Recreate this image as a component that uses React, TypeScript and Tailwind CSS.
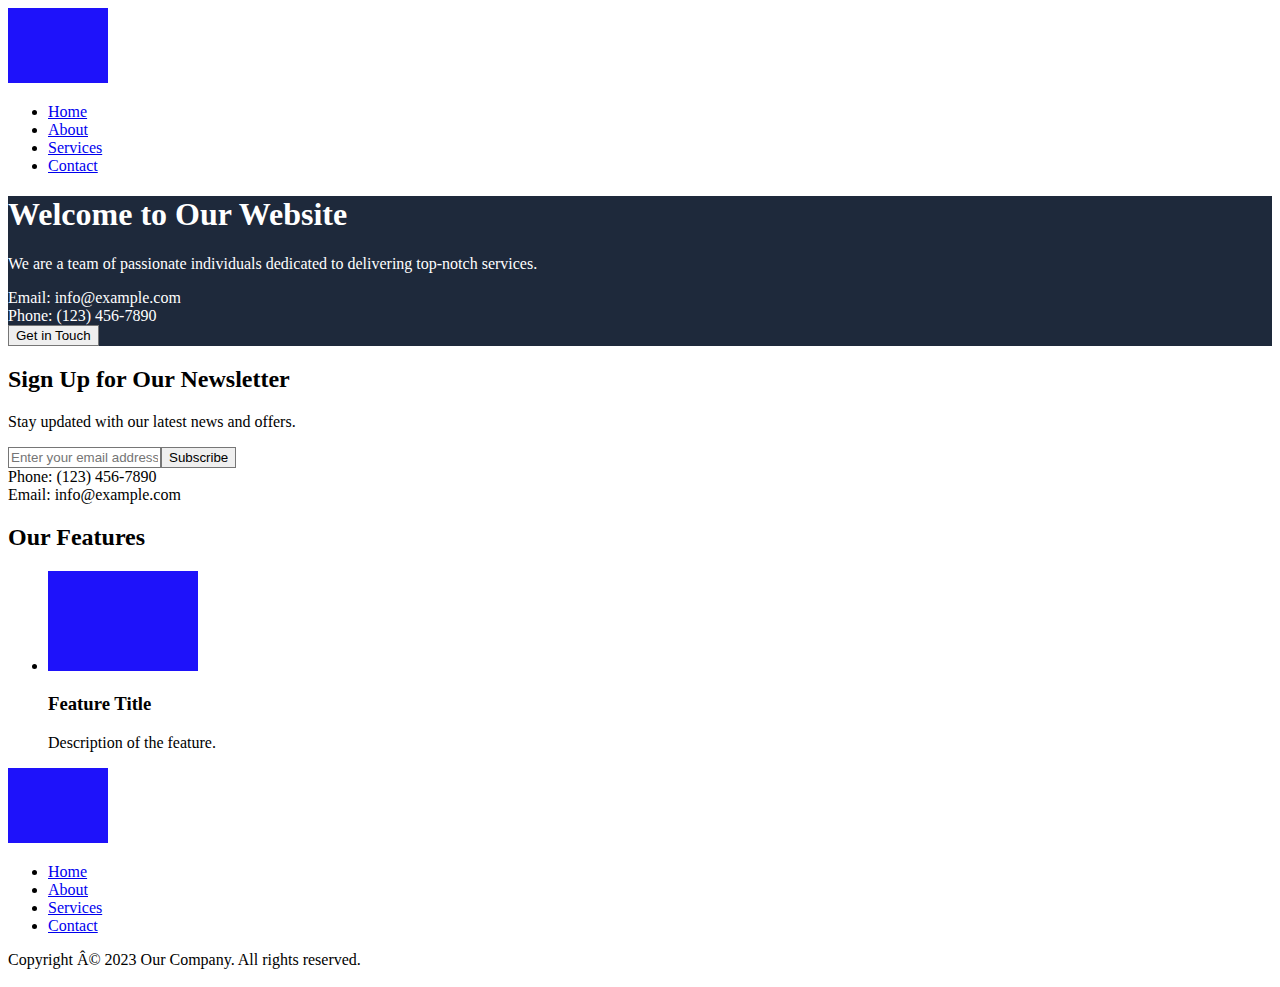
import React from "react";

const links = ["Home", "About", "Services", "Contact"];

const Logo = () => (
  <div>
    <div className="inline-block h-[75px] w-[100px] bg-[#1e12fa] align-baseline" />
  </div>
);

const Nav = () => (
  <ul className="my-4 list-disc pl-10">
    {links.map((l) => (
      <li key={l}>
        <a href="#" className="text-[#0000ee] underline">
          {l}
        </a>
      </li>
    ))}
  </ul>
);

const btn =
  "inline-block border border-[#767676] bg-[#efefef] px-[7px] py-[2px] font-['Liberation_Sans',Arial,sans-serif] text-[13.333px] leading-[normal] text-black";

export default function App() {
  return (
    <div className="m-2 font-['Liberation_Serif','Times_New_Roman',serif] text-base leading-[normal] text-black">
      <header>
        <Logo />
        <Nav />
      </header>

      <section className="bg-[#1e293b] text-white">
        <h1 className="my-[21.44px] text-[32px] font-bold leading-[normal]">Welcome to Our Website</h1>
        <p className="my-4">We are a team of passionate individuals dedicated to delivering top-notch services.</p>
        <div>Email: info@example.com</div>
        <div>Phone: (123) 456-7890</div>
        <button className={btn}>Get in Touch</button>
      </section>

      <section>
        <h2 className="my-[19.92px] text-2xl font-bold leading-[normal]">Sign Up for Our Newsletter</h2>
        <p className="my-4">Stay updated with our latest news and offers.</p>
        <form>
          <input
            type="email"
            placeholder="Enter your email address"
            className="w-[153px] border border-[#767676] px-[2px] py-[2px] font-['Liberation_Sans',Arial,sans-serif] text-[13.333px] leading-[normal] placeholder:text-[#757575]"
          />
          <button type="button" className={btn}>
            Subscribe
          </button>
        </form>
        <div>Phone: (123) 456-7890</div>
        <div>Email: info@example.com</div>
      </section>

      <section>
        <h2 className="my-[19.92px] text-2xl font-bold leading-[normal]">Our Features</h2>
        <ul className="my-4 list-disc pl-10">
          <li>
            <div className="inline-block h-[100px] w-[150px] bg-[#1e12fa] align-baseline" />
            <h3 className="my-[18.72px] text-[18.72px] font-bold leading-[normal]">Feature Title</h3>
            <p className="my-4">Description of the feature.</p>
          </li>
        </ul>
      </section>

      <footer>
        <Logo />
        <Nav />
        <p className="my-4">Copyright Â© 2023 Our Company. All rights reserved.</p>
      </footer>
    </div>
  );
}
